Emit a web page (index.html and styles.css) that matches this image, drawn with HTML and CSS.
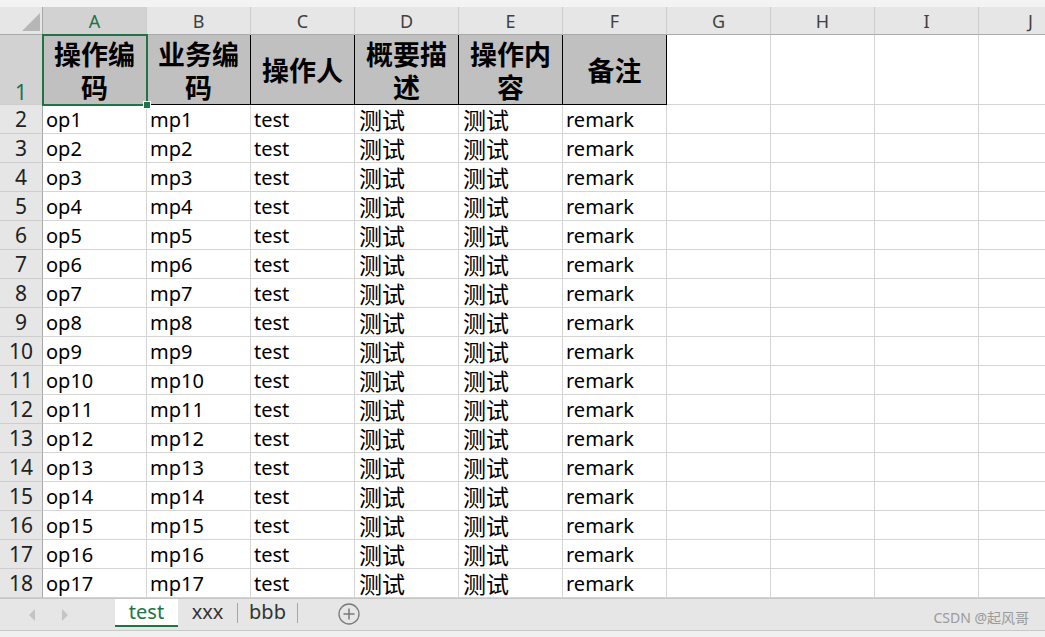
FILE: index.html
```html
<!DOCTYPE html>
<html lang="zh">
<head>
<meta charset="utf-8">
<title>Sheet</title>
<link rel="stylesheet" href="styles.css">
</head>
<body>
<div class="app">
  <div class="topstrip"></div>
  <div class="sheet">
    <div class="corner"><span class="tri"></span></div>
    <div class="ch sel">A</div><div class="ch">B</div><div class="ch">C</div><div class="ch">D</div><div class="ch">E</div><div class="ch">F</div><div class="ch">G</div><div class="ch">H</div><div class="ch">I</div><div class="ch jcol">J</div>

    <div class="rh rh1 sel">1</div>
    <div class="hd active">操作编码</div><div class="hd">业务编码</div><div class="hd">操作人</div><div class="hd">概要描述</div><div class="hd">操作内容</div><div class="hd">备注</div><div class="c"></div><div class="c"></div><div class="c"></div><div class="c"></div>

    <div class="rh">2</div><div class="c">op1</div><div class="c">mp1</div><div class="c">test</div><div class="c zh">测试</div><div class="c zh">测试</div><div class="c">remark</div><div class="c"></div><div class="c"></div><div class="c"></div><div class="c"></div>
    <div class="rh">3</div><div class="c">op2</div><div class="c">mp2</div><div class="c">test</div><div class="c zh">测试</div><div class="c zh">测试</div><div class="c">remark</div><div class="c"></div><div class="c"></div><div class="c"></div><div class="c"></div>
    <div class="rh">4</div><div class="c">op3</div><div class="c">mp3</div><div class="c">test</div><div class="c zh">测试</div><div class="c zh">测试</div><div class="c">remark</div><div class="c"></div><div class="c"></div><div class="c"></div><div class="c"></div>
    <div class="rh">5</div><div class="c">op4</div><div class="c">mp4</div><div class="c">test</div><div class="c zh">测试</div><div class="c zh">测试</div><div class="c">remark</div><div class="c"></div><div class="c"></div><div class="c"></div><div class="c"></div>
    <div class="rh">6</div><div class="c">op5</div><div class="c">mp5</div><div class="c">test</div><div class="c zh">测试</div><div class="c zh">测试</div><div class="c">remark</div><div class="c"></div><div class="c"></div><div class="c"></div><div class="c"></div>
    <div class="rh">7</div><div class="c">op6</div><div class="c">mp6</div><div class="c">test</div><div class="c zh">测试</div><div class="c zh">测试</div><div class="c">remark</div><div class="c"></div><div class="c"></div><div class="c"></div><div class="c"></div>
    <div class="rh">8</div><div class="c">op7</div><div class="c">mp7</div><div class="c">test</div><div class="c zh">测试</div><div class="c zh">测试</div><div class="c">remark</div><div class="c"></div><div class="c"></div><div class="c"></div><div class="c"></div>
    <div class="rh">9</div><div class="c">op8</div><div class="c">mp8</div><div class="c">test</div><div class="c zh">测试</div><div class="c zh">测试</div><div class="c">remark</div><div class="c"></div><div class="c"></div><div class="c"></div><div class="c"></div>
    <div class="rh">10</div><div class="c">op9</div><div class="c">mp9</div><div class="c">test</div><div class="c zh">测试</div><div class="c zh">测试</div><div class="c">remark</div><div class="c"></div><div class="c"></div><div class="c"></div><div class="c"></div>
    <div class="rh">11</div><div class="c">op10</div><div class="c">mp10</div><div class="c">test</div><div class="c zh">测试</div><div class="c zh">测试</div><div class="c">remark</div><div class="c"></div><div class="c"></div><div class="c"></div><div class="c"></div>
    <div class="rh">12</div><div class="c">op11</div><div class="c">mp11</div><div class="c">test</div><div class="c zh">测试</div><div class="c zh">测试</div><div class="c">remark</div><div class="c"></div><div class="c"></div><div class="c"></div><div class="c"></div>
    <div class="rh">13</div><div class="c">op12</div><div class="c">mp12</div><div class="c">test</div><div class="c zh">测试</div><div class="c zh">测试</div><div class="c">remark</div><div class="c"></div><div class="c"></div><div class="c"></div><div class="c"></div>
    <div class="rh">14</div><div class="c">op13</div><div class="c">mp13</div><div class="c">test</div><div class="c zh">测试</div><div class="c zh">测试</div><div class="c">remark</div><div class="c"></div><div class="c"></div><div class="c"></div><div class="c"></div>
    <div class="rh">15</div><div class="c">op14</div><div class="c">mp14</div><div class="c">test</div><div class="c zh">测试</div><div class="c zh">测试</div><div class="c">remark</div><div class="c"></div><div class="c"></div><div class="c"></div><div class="c"></div>
    <div class="rh">16</div><div class="c">op15</div><div class="c">mp15</div><div class="c">test</div><div class="c zh">测试</div><div class="c zh">测试</div><div class="c">remark</div><div class="c"></div><div class="c"></div><div class="c"></div><div class="c"></div>
    <div class="rh">17</div><div class="c">op16</div><div class="c">mp16</div><div class="c">test</div><div class="c zh">测试</div><div class="c zh">测试</div><div class="c">remark</div><div class="c"></div><div class="c"></div><div class="c"></div><div class="c"></div>
    <div class="rh">18</div><div class="c">op17</div><div class="c">mp17</div><div class="c">test</div><div class="c zh">测试</div><div class="c zh">测试</div><div class="c">remark</div><div class="c"></div><div class="c"></div><div class="c"></div><div class="c"></div>
  </div>
  <div class="tabbar">
    <div class="nav">
      <svg width="10" height="14" viewBox="0 0 10 14"><path d="M8 1 L2 7 L8 13 Z" fill="#c4c4c4"/></svg>
      <svg width="10" height="14" viewBox="0 0 10 14"><path d="M2 1 L8 7 L2 13 Z" fill="#c4c4c4"/></svg>
    </div>
    <div class="tab current">test</div>
    <div class="tab">xxx</div>
    <div class="sep"></div>
    <div class="tab">bbb</div>
    <div class="sep"></div>
    <div class="add">
      <svg width="24" height="24" viewBox="0 0 24 24"><circle cx="12" cy="12" r="10" fill="none" stroke="#7a7a7a" stroke-width="1.3"/><path d="M12 6.5 V17.5 M6.5 12 H17.5" stroke="#7a7a7a" stroke-width="1.5"/></svg>
    </div>
    <div class="mark">CSDN @起风哥</div>
  </div>
  <div class="status"></div>
</div>
</body>
</html>
```

FILE: styles.css
```css
html, body {
  margin: 0;
  padding: 0;
  overflow: hidden;
  background: #ffffff;
}
.app {
  width: 1045px;
  height: 637px;
  overflow: hidden;
  display: flex;
  flex-direction: column;
  font-family: "Noto Sans", "Noto Sans CJK SC", sans-serif;
  color: #000;
}
.topstrip {
  height: 7px;
  background: #f3f3f3;
  flex: none;
}
.sheet {
  flex: none;
  display: grid;
  grid-template-columns: 43px repeat(10, 104px);
  grid-template-rows: 28px 70px repeat(17, 29px);
  width: 1083px;
}
.sheet > div {
  box-sizing: border-box;
  border-right: 1px solid #d4d4d4;
  border-bottom: 1px solid #d4d4d4;
  min-width: 0;
  overflow: hidden;
}
.corner {
  background: #e6e6e6;
  position: relative;
  border-right-color: #a9a9a9 !important;
  border-bottom-color: #a9a9a9 !important;
}
.corner .tri {
  position: absolute;
  right: 2px;
  bottom: 3px;
  width: 0;
  height: 0;
  border-left: 18px solid transparent;
  border-bottom: 18px solid #b6b6b6;
}
.ch {
  background: #e6e6e6;
  border-bottom-color: #a9a9a9 !important;
  border-right-color: #cdcdcd !important;
  font-size: 18px;
  color: #404040;
  text-align: center;
  line-height: 29px;
}
.ch.sel {
  background: #d2d2d2;
  color: #217346;
}
.rh {
  background: #e6e6e6;
  border-right-color: #a9a9a9 !important;
  border-bottom-color: #cdcdcd !important;
  font-size: 21px;
  color: #222;
  text-align: center;
  line-height: 29px;
}
.rh1 {
  display: flex;
  align-items: flex-end;
  justify-content: center;
  line-height: 24px;
}
.rh.sel {
  background: #d2d2d2;
  color: #217346;
}
.hd {
  background: #c0c0c0;
  border-right: 1px solid #000 !important;
  border-bottom: 1px solid #000 !important;
  display: flex;
  align-items: center;
  justify-content: center;
  text-align: center;
  font-family: "Noto Sans CJK SC", sans-serif;
  font-weight: 700;
  font-size: 27px;
  line-height: 33px;
  padding: 0 2px;
}
.hd.active {
  position: relative;
  overflow: visible !important;
}
.hd.active::before {
  content: "";
  position: absolute;
  left: -1px;
  top: -1px;
  right: -2px;
  bottom: -2px;
  border: 2px solid #217346;
  pointer-events: none;
}
.hd.active::after {
  content: "";
  position: absolute;
  right: -5px;
  bottom: -5px;
  width: 6px;
  height: 6px;
  background: #217346;
  border: 1px solid #fff;
  z-index: 2;
}
.c {
  font-size: 20px;
  line-height: 29px;
  padding-left: 3px;
  white-space: nowrap;
  background: #fff;
}
.c.zh {
  font-family: "Noto Sans CJK SC", sans-serif;
  font-size: 23px;
  line-height: 28px;
  padding-left: 4px;
  overflow: visible !important;
}
.tabbar {
  flex: none;
  height: 31px;
  background: #e6e6e6;
  border-top: 1px solid #c6c6c6;
  display: flex;
  align-items: stretch;
  font-size: 20px;
}
.nav {
  width: 115px;
  display: flex;
  align-items: center;
  gap: 23px;
  padding-left: 27px;
  box-sizing: border-box;
}
.tab {
  width: 59px;
  text-align: center;
  line-height: 26px;
  color: #333;
}
.tab.current {
  width: 63px;
  background: #fff;
  color: #217346;
  border-bottom: 2px solid #217346;
  height: 26px;
}
.sep {
  width: 1px;
  background: #a6a6a6;
  margin: 4px 0 7px;
}
.add {
  margin-left: 39px;
  display: flex;
  align-items: center;
  padding-bottom: 1px;
}
.mark {
  margin-left: auto;
  padding-right: 16px;
  font-size: 14px;
  color: #9a9a9a;
  align-self: flex-end;
  line-height: 24px;
}
.status {
  flex: 1;
  background: #f0f0f0;
  border-top: 1px solid #c8c8c8;
}
```
